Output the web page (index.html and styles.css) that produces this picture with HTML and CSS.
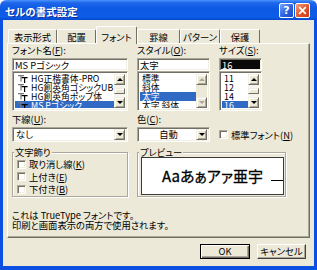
FILE: index.html
```html
<!DOCTYPE html>
<html lang="ja">
<head>
    <meta charset="UTF-8">
    <title>セルの書式設定</title>
    <link rel="stylesheet" href="styles.css">
</head>
<body>
<div class="window">
    <div class="titlebar">
        <span class="title">セルの書式設定</span>
        <div class="caption">
            <span class="cbtn help">?</span>
            <span class="cbtn close"><svg width="9" height="9" viewBox="0 0 9 9"><path d="M1.2 1.2L7.8 7.8M7.8 1.2L1.2 7.8" stroke="#fff" stroke-width="1.7"/></svg></span>
        </div>
    </div>
    <div class="frame">
        <div class="tabs">
            <div class="tab">表示形式</div>
            <div class="tab">配置</div>
            <div class="tab on">フォント</div>
            <div class="tab">罫線</div>
            <div class="tab">パターン</div>
            <div class="tab">保護</div>
        </div>

        <div class="panel">
            <!-- font / style / size -->
            <div class="row">
                <div class="col c1">
                    <div class="lbl">フォント名(<u>F</u>):</div>
                    <div class="edit sunken">MS Pゴシック</div>
                    <div class="list sunken">
                        <div class="items">
                            <div class="item"><svg class="tt" width="10" height="8" viewBox="0 0 10 8"><path d="M0 .6h6M3 .6v6" stroke="#7a7a7a" stroke-width="1.2"/><path d="M3.6 2.6h6M6.6 2.6V8" stroke="#000" stroke-width="1.2"/></svg><span>HG正楷書体-PRO</span></div>
                            <div class="item"><svg class="tt" width="10" height="8" viewBox="0 0 10 8"><path d="M0 .6h6M3 .6v6" stroke="#7a7a7a" stroke-width="1.2"/><path d="M3.6 2.6h6M6.6 2.6V8" stroke="#000" stroke-width="1.2"/></svg><span>HG創英角ゴシックUB</span></div>
                            <div class="item"><svg class="tt" width="10" height="8" viewBox="0 0 10 8"><path d="M0 .6h6M3 .6v6" stroke="#7a7a7a" stroke-width="1.2"/><path d="M3.6 2.6h6M6.6 2.6V8" stroke="#000" stroke-width="1.2"/></svg><span>HG創英角ポップ体</span></div>
                            <div class="item sel"><svg class="tt" width="10" height="8" viewBox="0 0 10 8"><path d="M0 .6h6M3 .6v6" stroke="#7a7a7a" stroke-width="1.2"/><path d="M3.6 2.6h6M6.6 2.6V8" stroke="#000" stroke-width="1.2"/></svg><span>MS Pゴシック</span></div>
                        </div>
                        <div class="vscroll">
                            <span class="sbtn"><i class="up"></i></span>
                            <span class="track"><span class="thumb"></span></span>
                            <span class="sbtn"><i class="down"></i></span>
                        </div>
                    </div>
                </div>
                <div class="col c2">
                    <div class="lbl">スタイル(<u>O</u>):</div>
                    <div class="edit sunken">太字</div>
                    <div class="list sunken">
                        <div class="items plain">
                            <div class="item">標準</div>
                            <div class="item">斜体</div>
                            <div class="item sel">太字</div>
                            <div class="item">太字 斜体</div>
                        </div>
                        <div class="vscroll off">
                            <span class="sbtn"><i class="up"></i></span>
                            <span class="track"></span>
                            <span class="sbtn"><i class="down"></i></span>
                        </div>
                    </div>
                </div>
                <div class="col c3">
                    <div class="lbl">サイズ(<u>S</u>):</div>
                    <div class="edit sunken hl">16</div>
                    <div class="list sunken">
                        <div class="items plain">
                            <div class="item">11</div>
                            <div class="item">12</div>
                            <div class="item">14</div>
                            <div class="item sel">16</div>
                        </div>
                        <div class="vscroll">
                            <span class="sbtn"><i class="up"></i></span>
                            <span class="track"><span class="thumb"></span></span>
                            <span class="sbtn"><i class="down"></i></span>
                        </div>
                    </div>
                </div>
            </div>

            <!-- underline / colour -->
            <div class="row row2">
                <div class="col c1">
                    <div class="lbl small">下線(<u>U</u>):</div>
                    <div class="combo sunken">
                        <span class="val">なし</span>
                        <span class="sbtn"><i class="down"></i></span>
                    </div>
                </div>
                <div class="col c2">
                    <div class="lbl small">色(<u>C</u>):</div>
                    <div class="combo sunken">
                        <span class="val center">自動</span>
                        <span class="sbtn"><i class="down"></i></span>
                    </div>
                </div>
                <div class="col c3 bottom">
                    <div class="chk"><span class="box sunken"></span><span>標準フォント(<u>N</u>)</span></div>
                </div>
            </div>

            <!-- effects / preview -->
            <div class="row row3">
                <div class="group c1">
                    <span class="legend">文字飾り</span>
                    <div class="opt"><span class="box sunken"></span><span>取り消し線(<u>K</u>)</span></div>
                    <div class="opt"><span class="box sunken"></span><span>上付き(<u>E</u>)</span></div>
                    <div class="opt"><span class="box sunken"></span><span>下付き(<u>B</u>)</span></div>
                </div>
                <div class="group wide">
                    <span class="legend">プレビュー</span>
                    <div class="preview">
                        <span class="sample">Aaあぁアァ亜宇</span>
                        <span class="mark"></span>
                    </div>
                </div>
            </div>

            <div class="note">
                これは TrueType フォントです。<br>
                印刷と画面表示の両方で使用されます。
            </div>
        </div>

        <div class="buttons">
            <div class="btn ok">OK</div>
            <div class="btn cancel">キャンセル</div>
        </div>
    </div>
</div>
</body>
</html>
```

FILE: styles.css
```css
body {
    margin: 0;
    background: #fff;
    font-family: "Noto Sans CJK JP", "Noto Sans", sans-serif;
    font-size: 9.3px;
    font-feature-settings: "palt" 1;
    color: #000;
}

u {
    text-decoration: underline;
    text-underline-offset: 1px;
}

.window {
    width: 317px;
    height: 270px;
    display: flex;
    flex-direction: column;
}

/* title bar */
.titlebar {
    height: 20px;
    flex: none;
    box-sizing: border-box;
    display: flex;
    align-items: center;
    justify-content: space-between;
    padding: 0 7px 0 5px;
    background: linear-gradient(#4a93fb 0%, #1e66eb 14%, #0c59e4 45%, #0d5de8 85%, #0648cf 100%);
    border-radius: 6px 6px 0 0;
}

.title {
    color: #fff;
    font-weight: bold;
    font-size: 10.5px;
    line-height: 12px;
    padding-top: 3px;
    text-shadow: 1px 1px 0 #0b2b9c;
}

.caption {
    display: flex;
    gap: 1px;
    padding-top: 1px;
}

.cbtn {
    width: 15px;
    height: 15px;
    box-sizing: border-box;
    border: 1px solid #fff;
    border-radius: 2px;
    display: flex;
    align-items: center;
    justify-content: center;
}

.help {
    background: linear-gradient(135deg, #7aa6fa, #2c62e0 55%, #1d4ac4);
    color: #fff;
    font: bold 11px "DejaVu Sans", sans-serif;
}

.close {
    background: linear-gradient(135deg, #f3a07e, #e0562a 55%, #c63c14);
}

/* window body */
.frame {
    flex: 1;
    display: flex;
    flex-direction: column;
    background: #ece9d8;
    border: solid #0b50e0;
    border-width: 0 3px 4px 3px;
}

.tabs {
    display: flex;
    align-items: flex-end;
    height: 17px;
    margin-top: 6px;
    padding-left: 5px;
}

.tab {
    height: 14px;
    box-sizing: border-box;
    display: flex;
    align-items: center;
    justify-content: center;
    border: 1px solid;
    border-color: #fff #716f64 transparent #fff;
    border-bottom: none;
    border-radius: 2px 2px 0 0;
    white-space: nowrap;
}

.tab:nth-child(1) { width: 49px; }
.tab:nth-child(2) { width: 39px; }
.tab:nth-child(3) { width: 41px; }
.tab:nth-child(4) { width: 43px; }
.tab:nth-child(5) { width: 40px; }
.tab:nth-child(6) { width: 40px; }

.tab.on {
    height: 18px;
    padding-top: 2px;
    margin-bottom: -1px;
    position: relative;
    z-index: 1;
    background: #ece9d8;
}

.panel {
    height: 195px;
    margin: 0 4px;
    box-sizing: border-box;
    border: 1px solid;
    border-color: #fff #716f64 #716f64 #fff;
    box-shadow: inset -1px -1px #aca899;
    padding-left: 4px;
}

.row {
    display: flex;
    gap: 9px;
}

.col {
    display: flex;
    flex-direction: column;
}

.c1 { width: 116px; }
.c2 { width: 73px; }
.c3 { width: 43px; }

.lbl {
    height: 13px;
    line-height: 13px;
    margin-bottom: 1px;
    white-space: nowrap;
}

.lbl.small {
    height: 12px;
    line-height: 12px;
    margin-bottom: 2px;
}

.sunken {
    box-sizing: border-box;
    background: #fff;
    border: 1px solid;
    border-color: #aca899 #fff #fff #aca899;
    box-shadow: inset 1px 1px #716f64, inset -1px -1px #f1efe2;
}

.edit {
    height: 13px;
    display: flex;
    align-items: center;
    padding-left: 2px;
    white-space: nowrap;
}

.edit.hl {
    background: #0a0a0a;
    color: #fff;
}

.list {
    height: 40px;
    display: flex;
    padding: 2px;
}

.items {
    flex: 1;
    overflow: hidden;
    font-size: 8.8px;
}

.item {
    height: 9px;
    line-height: 9px;
    display: flex;
    align-items: center;
    white-space: nowrap;
    padding-left: 3px;
}

.plain .item {
    padding-left: 2px;
}

.item .tt {
    flex: none;
    margin-right: 3px;
}

.item.sel {
    background: #316ac5;
    color: #fff;
}

/* scroll bars and arrow buttons */
.vscroll {
    width: 11px;
    display: flex;
    flex-direction: column;
}

.sbtn {
    width: 11px;
    height: 11px;
    flex: none;
    box-sizing: border-box;
    background: #ece9d8;
    border: 1px solid;
    border-color: #f1efe2 #716f64 #716f64 #f1efe2;
    box-shadow: inset 1px 1px #fff, inset -1px -1px #aca899;
    display: flex;
    align-items: center;
    justify-content: center;
}

.track {
    flex: 1;
    display: flex;
    flex-direction: column;
    justify-content: center;
    background: #f5f4ef;
}

.thumb {
    height: 6px;
    box-sizing: border-box;
    background: #ece9d8;
    border: 1px solid;
    border-color: #f1efe2 #716f64 #716f64 #f1efe2;
    box-shadow: inset 1px 1px #fff;
}

.off .track {
    background: #ece9d8;
}

.up,
.down {
    width: 0;
    height: 0;
    border: solid transparent;
}

.up {
    border-width: 0 3px 3px;
    border-bottom-color: #000;
}

.down {
    border-width: 3px 3px 0;
    border-top-color: #000;
}

.off .up { border-bottom-color: #aca899; }
.off .down { border-top-color: #aca899; }

.row2 {
    margin-top: 2px;
}

.combo {
    height: 15px;
    display: flex;
    align-items: center;
    padding: 2px;
}

.combo .val {
    flex: 1;
    line-height: 11px;
    padding-left: 1px;
}

.combo .val.center {
    text-align: center;
}

.bottom {
    justify-content: flex-end;
}

.chk,
.opt {
    display: flex;
    align-items: center;
    gap: 3px;
    white-space: nowrap;
}

.chk {
    height: 15px;
}

.box {
    width: 9px;
    height: 9px;
    flex: none;
}

/* group boxes */
.row3 {
    margin-top: 10px;
}

.group {
    height: 45px;
    box-sizing: border-box;
    display: flex;
    flex-direction: column;
    border: 1px solid #aca899;
    box-shadow: inset 1px 1px #fff, 1px 1px #fff;
}

.group.wide {
    width: 149px;
}

.legend {
    align-self: flex-start;
    height: 11px;
    line-height: 11px;
    margin: -6px 0 0 1px;
    padding: 0 1px;
    background: #ece9d8;
    white-space: nowrap;
}

.opt {
    height: 12.5px;
    padding-left: 4px;
}

.preview {
    width: 143px;
    height: 38px;
    margin: -1px 0 0 3px;
    box-sizing: border-box;
    border: 1px solid #3a3a3a;
    background: #fff;
    display: flex;
    align-items: center;
    padding-left: 20px;
}

.sample {
    flex: 1;
    font-size: 15px;
    line-height: 16px;
    white-space: nowrap;
    -webkit-text-stroke: 0.3px #000;
}

.mark {
    width: 12px;
    height: 1px;
    background: #000;
    margin-top: 9px;
}

.note {
    margin-top: 13px;
    line-height: 10px;
    white-space: nowrap;
}

/* dialog buttons */
.buttons {
    display: flex;
    justify-content: flex-end;
    gap: 7px;
    margin: 6px 8px 0 0;
}

.btn {
    height: 15px;
    box-sizing: border-box;
    background: #ece9d8;
    border: 1px solid;
    border-color: #fff #404040 #404040 #fff;
    box-shadow: inset -1px -1px #aca899;
    display: flex;
    align-items: center;
    justify-content: center;
    line-height: 11px;
}

.ok {
    width: 50px;
    border-color: #000;
    box-shadow: inset 1px 1px #fff, inset -1px -1px #716f64, inset -2px -2px #aca899;
}

.cancel {
    width: 49px;
}
```
